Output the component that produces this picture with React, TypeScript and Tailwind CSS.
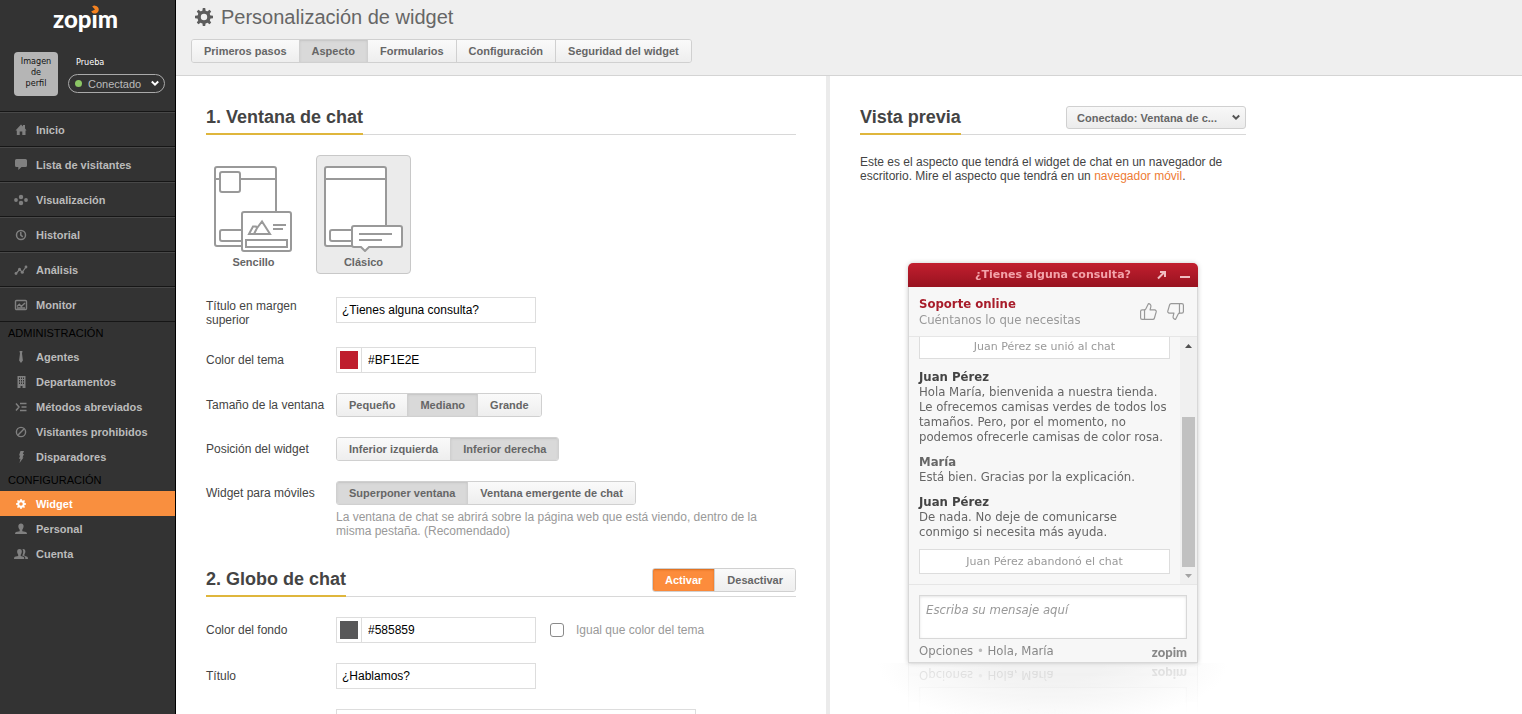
import { useState } from 'react';
import type { ReactNode } from 'react';
import { ThumbsUp, ThumbsDown } from 'lucide-react';
import clsx from 'clsx';

interface NavItem {
  label: string;
  icon: ReactNode;
}

interface ChatMessage {
  id: number;
  author: string;
  text: string;
  isAgent: boolean;
}

const GEAR_TEETH = [0, 45, 90, 135, 180, 225, 270, 315];

function Gear({ className }: { className?: string }) {
  return (
    <svg viewBox="0 0 18 18" className={className} fill="currentColor" aria-hidden="true">
      {GEAR_TEETH.map(a => (
        <path key={a} d="M7.8 0h2.4l.6 4H7.200z" transform={`rotate(${a} 9 9)`} />
      ))}
      <path fillRule="evenodd" d="M9 2.4a6.6 6.6 0 1 0 0 13.2A6.6 6.6 0 1 0 9 2.4zM9 5.8a3.2 3.2 0 1 1 0 6.4 3.2 3.2 0 1 1 0-6.4z" />
    </svg>
  );
}

function NavIcon({ children }: { children: ReactNode }) {
  return (
    <svg viewBox="0 0 14 14" className="w-3.5 h-3.5 shrink-0" fill="currentColor" aria-hidden="true">
      {children}
    </svg>
  );
}

const mainNav: NavItem[] = [
  { label: 'Inicio', icon: <NavIcon><path d="M7 1.500 9 3.500V2h2v3.500L12.500 7.500H11.500V12H8.300V8.500H5.700V12H2.800V7.500H1.500z" /></NavIcon> },
  { label: 'Lista de visitantes', icon: <NavIcon><path d="M2.500 1h9Q13 1 13 2.500V7.500Q13 9 11.500 9H7.500L4.300 12V9H2.500Q1 9 1 7.500V2.500Q1 1 2.500 1z" /></NavIcon> },
  {
    label: 'Visualización',
    icon: (
      <NavIcon>
        <circle cx="2" cy="7" r="1.900" /><circle cx="12" cy="7" r="1.900" />
        <circle cx="7" cy="4" r="2.200" /><circle cx="7" cy="10" r="2.200" />
      </NavIcon>
    ),
  },
  {
    label: 'Historial',
    icon: (
      <NavIcon>
        <g fill="none" stroke="currentColor" strokeWidth="1.500"><circle cx="7" cy="7" r="4.500" /><path d="M6.800 4v3.200l2 1.600" /></g>
      </NavIcon>
    ),
  },
  {
    label: 'Análisis',
    icon: (
      <NavIcon>
        <path d="M2 10.500 5.500 6.500 8.300 9 12 4" fill="none" stroke="currentColor" strokeWidth="1.200" />
        <circle cx="2" cy="10.500" r="1.400" /><circle cx="5.500" cy="6.300" r="1.500" /><circle cx="8.300" cy="9.200" r="1.500" /><circle cx="12" cy="4" r="1.400" />
      </NavIcon>
    ),
  },
  {
    label: 'Monitor',
    icon: (
      <NavIcon>
        <g fill="none" stroke="currentColor" strokeWidth="1.400"><rect x="1.500" y="2.500" width="11" height="9" rx="1" /><path d="M3 8.500 5.300 6.300 7.300 8.500 11 5M3 10h8" /></g>
      </NavIcon>
    ),
  },
];

const adminNav: NavItem[] = [
  { label: 'Agentes', icon: <NavIcon><path d="M5.500 1h3L8 3.500l.9 7L7 13l-1.900-2.500.9-7z" /></NavIcon> },
  {
    label: 'Departamentos',
    icon: (
      <NavIcon>
        <path fillRule="evenodd" d="M3.500 1h8v12H8.500v-2h-2v2h-3zM5 2.500V4h1V2.500zm2 0V4h1V2.500zm2 0V4h1V2.500zM5 5v1.500h1V5zm2 0v1.500h1V5zm2 0v1.500h1V5zM5 7.500V9h1V7.500zm2 0V9h1V7.500zm2 0V9h1V7.500z" />
      </NavIcon>
    ),
  },
  {
    label: 'Métodos abreviados',
    icon: (
      <NavIcon>
        <path d="M2 3.500 5 7l-3 3.500M6 3.500h6.500M7.500 7h5M6 10.500h6.500" fill="none" stroke="currentColor" strokeWidth="1.500" />
      </NavIcon>
    ),
  },
  {
    label: 'Visitantes prohibidos',
    icon: (
      <NavIcon>
        <g fill="none" stroke="currentColor" strokeWidth="1.400"><circle cx="7" cy="7" r="4.600" /><path d="M3.800 10.200 10.200 3.800" /></g>
      </NavIcon>
    ),
  },
  { label: 'Disparadores', icon: <NavIcon><path d="M6.500 1H10L8.800 4H10L8.500 7.500h1L5.500 13l1-4.300H5L6.200 5.500H5z" /></NavIcon> },
];

const configNav: NavItem[] = [
  { label: 'Widget', icon: <Gear className="w-3.5 h-3.5 p-0.5 shrink-0" /> },
  {
    label: 'Personal',
    icon: <NavIcon><path d="M7 1.500c3.300 0 3.200 4 1.300 6.300v1.400L12 10q1 .3 1 2H1q0-1.700 1-2l3.700-.8V7.800C3.800 5.500 3.700 1.500 7 1.500z" /></NavIcon>,
  },
  {
    label: 'Cuenta',
    icon: (
      <NavIcon>
        <path d="M5.500 2c3 0 2.800 3.800 1.200 5.700v1.200l2.800.9q.8.300.8 2.200H0q0-1.900.8-2.200L4.200 9V7.700C2.700 5.500 2.600 2 5.500 2z" />
        <path d="M8.500 2.200c3.200-.7 3.600 3 1.900 5.300v1.300l2.800.9q.8.300.8 2.300h-2.700q.1-2.200-1-2.700L8.200 8.500C9.600 6 9.500 3.700 8.500 2.200z" />
      </NavIcon>
    ),
  },
];

const messages: ChatMessage[] = [
  {
    id: 1,
    author: 'Juan Pérez',
    text: 'Hola María, bienvenida a nuestra tienda. Le ofrecemos camisas verdes de todos los tamaños. Pero, por el momento, no podemos ofrecerle camisas de color rosa.',
    isAgent: true,
  },
  { id: 2, author: 'María', text: 'Está bien. Gracias por la explicación.', isAgent: false },
  { id: 3, author: 'Juan Pérez', text: 'De nada. No deje de comunicarse conmigo si necesita más ayuda.', isAgent: true },
];

export default function App() {
  const [tab, setTab] = useState('Aspecto');
  const [layout, setLayout] = useState('Clásico');
  const [size, setSize] = useState('Mediano');
  const [position, setPosition] = useState('Inferior derecha');
  const [mobile, setMobile] = useState('Superponer ventana');
  const [badge, setBadge] = useState('Activar');

  return (
    <div className="flex h-screen overflow-hidden bg-white font-['Liberation_Sans',Arial,sans-serif] text-xs leading-[14px] text-[#444]">
      <Sidebar />

      <div className="flex flex-col flex-1 min-w-0">
        <header className="h-[76px] shrink-0 bg-[#efefef] border-b border-[#d4d4d4] pl-[15px] pt-1.5">
          <div className="flex items-center gap-2 h-[22px] text-[#666]">
            <Gear className="w-[18px] h-[18px] ml-1 text-[#5c5c5c]" />
            <h1 className="text-xl leading-[22px]">Personalización de widget</h1>
          </div>
          <nav className="mt-[11px]">
            <ButtonGroup
              options={['Primeros pasos', 'Aspecto', 'Formularios', 'Configuración', 'Seguridad del widget']}
              value={tab}
              onChange={setTab}
            />
          </nav>
        </header>

        <div className="flex flex-1 min-h-0">
          <main className="w-[654px] shrink-0 overflow-hidden border-r-4 border-[#ebebeb] px-[30px] pt-[30px]">
            <SectionHeader title="1. Ventana de chat" />

            <div className="flex gap-[15px] mt-5 mb-[23px]">
              <LayoutCard label="Sencillo" active={layout === 'Sencillo'} onSelect={setLayout}>
                <rect x="1" y="1" width="61" height="79" rx="2" />
                <path d="M1 13h61" />
                <rect x="6" y="6" width="20" height="20" rx="2" fill="white" />
                <rect x="6" y="64" width="40" height="11" rx="2" />
                <rect x="28" y="46" width="49" height="39" rx="2" fill="white" />
                <path d="M35 68 39 60.500 42 60.500 43 62 48 55.500 56 68zM43 62l-3 6M59 59h13M59 63h10" />
                <rect x="32" y="74" width="41" height="7" />
              </LayoutCard>
              <LayoutCard label="Clásico" active={layout === 'Clásico'} onSelect={setLayout}>
                <rect x="1" y="1" width="61" height="79" rx="2" fill="white" />
                <path d="M1 13h61" />
                <rect x="6" y="64" width="40" height="11" rx="2" />
                <path d="M30 60h46q2 0 2 2v17q0 2-2 2H45l-4 4-4-4h-7q-2 0-2-2V62q0-2 2-2z" fill="white" />
                <path d="M35 68h33M35 74h23" />
              </LayoutCard>
            </div>

            <div className="space-y-5">
              <div className="flex items-start">
                <label htmlFor="chat-title" className="w-[130px] pt-0.5 pr-5">Título en margen superior</label>
                <TextInput id="chat-title" value="¿Tienes alguna consulta?" />
              </div>
              <FormRow label="Color del tema" htmlFor="theme-color">
                <ColorInput id="theme-color" value="#BF1E2E" swatch="bg-[#bf1e2e]" />
              </FormRow>
              <FormRow label="Tamaño de la ventana">
                <ButtonGroup options={['Pequeño', 'Mediano', 'Grande']} value={size} onChange={setSize} />
              </FormRow>
              <FormRow label="Posición del widget">
                <ButtonGroup options={['Inferior izquierda', 'Inferior derecha']} value={position} onChange={setPosition} />
              </FormRow>
              <div>
                <FormRow label="Widget para móviles">
                  <ButtonGroup options={['Superponer ventana', 'Ventana emergente de chat']} value={mobile} onChange={setMobile} />
                </FormRow>
                <p className="ml-[130px] mr-5 mt-[5px] text-[#999]">
                  La ventana de chat se abrirá sobre la página web que está viendo, dentro de la misma pestaña. (Recomendado)
                </p>
              </div>
            </div>

            <div className="mt-[30px] mb-5">
              <SectionHeader title="2. Globo de chat">
                <ButtonGroup options={['Activar', 'Desactivar']} value={badge} onChange={setBadge} accent />
              </SectionHeader>
            </div>

            <div className="space-y-5">
              <FormRow label="Color del fondo" htmlFor="badge-color">
                <ColorInput id="badge-color" value="#585859" swatch="bg-[#585859]" />
                <label className="flex items-center gap-3 ml-3.5 text-[#999]">
                  <input type="checkbox" className="appearance-none w-3.5 h-3.5 bg-white border border-[#8a8a8a] rounded-[3px] checked:bg-[#fc8c3c]" />
                  Igual que color del tema
                </label>
              </FormRow>
              <FormRow label="Título" htmlFor="badge-title">
                <TextInput id="badge-title" value="¿Hablamos?" />
              </FormRow>
              <div className="ml-[130px]">
                <textarea aria-label="Texto del globo" className="block w-[360px] h-16 border border-[#ddd] resize-none" />
              </div>
            </div>
          </main>

          <aside className="flex-1 min-w-0 overflow-hidden pl-[30px] pt-[30px]">
            <div className="w-[386px]">
              <SectionHeader title="Vista previa">
                <div className="relative">
                  <select
                    aria-label="Estado de la vista previa"
                    className="appearance-none block w-[180px] h-[23px] pl-2.5 pr-6 bg-linear-to-b from-[#f8f8f8] to-[#ececec] border border-[#d0d0d0] rounded-[3px] text-[11px] font-bold text-[#666]"
                  >
                    <option>Conectado: Ventana de c...</option>
                  </select>
                  <Chevron className="absolute right-1.5 top-2 text-[#555]" />
                </div>
              </SectionHeader>
              <p className="mt-5">
                Este es el aspecto que tendrá el widget de chat en un navegador de escritorio. Mire el aspecto que tendrá en un{' '}
                <a href="#movil" className="text-[#ee7c35]">navegador móvil</a>.
              </p>
              <div className="mt-20 ml-12">
                <ChatPreview />
              </div>
            </div>
          </aside>
        </div>
      </div>
    </div>
  );
}

function Sidebar() {
  return (
    <aside className="w-44 shrink-0 bg-[#333] border-r border-black">
      <div className="h-[111px] pt-[7px]">
        <div className="flex justify-center pr-1">
          <div className="relative font-['Lato',sans-serif] font-black text-2xl leading-6 text-white">
            zopim
            <svg viewBox="0 0 10 10" className="absolute left-[37px] -top-0.5 w-2.5 h-2.5" aria-hidden="true">
              <rect width="10" height="10" fill="#333" />
              <path d="M5 4.500 1.200 6.500A4 4 0 1 0 2.200 1.500z" fill="#f58220" />
            </svg>
          </div>
        </div>
        <div className="flex mt-[21px] pl-3.5">
          <div className="w-11 h-11 pt-1 px-1.5 rounded bg-[#b5b5b5] text-center font-['DejaVu_Sans_Condensed','DejaVu_Sans',sans-serif] text-[9px] leading-[11px] text-[#111]">
            Imagen de perfil
          </div>
          <div className="ml-2.5">
            <p className="mt-1 ml-2 font-['DejaVu_Sans_Condensed','DejaVu_Sans',sans-serif] text-[9px] leading-3 text-white">Prueba</p>
            <div className="relative mt-1.5">
              <select aria-label="Estado" className="appearance-none block w-[97px] h-[19px] pl-[19px] bg-transparent border border-[#aaa] rounded-full text-[11px] text-[#bbb]">
                <option>Conectado</option>
              </select>
              <span className="absolute left-[7px] top-1.5 w-[7px] h-[7px] rounded-full bg-[#8cc765]" />
              <Chevron className="absolute right-1.5 top-1.5 text-white" />
            </div>
          </div>
        </div>
      </div>

      <nav className="border-t border-[#161616] text-[11px] font-bold text-[#bbb]">
        {mainNav.map(item => (
          <a
            key={item.label}
            href="#nav"
            className="flex items-center gap-2 h-[35px] pl-3.5 border-t border-t-[#484848] border-b border-b-[#161616]"
          >
            <span className="text-[#808080]">{item.icon}</span>
            {item.label}
          </a>
        ))}
        <NavHeading>ADMINISTRACIÓN</NavHeading>
        {adminNav.map(item => <NavLink key={item.label} item={item} />)}
        <NavHeading>CONFIGURACIÓN</NavHeading>
        {configNav.map(item => <NavLink key={item.label} item={item} active={item.label === 'Widget'} />)}
      </nav>
    </aside>
  );
}

function NavHeading({ children }: { children: ReactNode }) {
  return <h2 className="flex items-center h-[22px] pl-2 font-normal text-black">{children}</h2>;
}

function NavLink({ item, active }: { item: NavItem; active?: boolean }) {
  return (
    <a href="#nav" className={clsx('flex items-center gap-2 h-[25px] pl-3.5', active && 'bg-[#f98f3f] text-white')}>
      <span className={active ? 'text-white' : 'text-[#808080]'}>{item.icon}</span>
      {item.label}
    </a>
  );
}

function Chevron({ className }: { className?: string }) {
  return (
    <svg viewBox="0 0 8 7" className={clsx('w-2 h-[7px] pointer-events-none', className)} fill="none" stroke="currentColor" strokeWidth="2" aria-hidden="true">
      <path d="M.8 1.500 4 4.700 7.200 1.500" />
    </svg>
  );
}

function SectionHeader({ title, children }: { title: string; children?: ReactNode }) {
  return (
    <div className="flex items-start justify-between h-[29px] border-b border-[#d8d8d8]">
      <h2 className="h-[29px] border-b-2 border-[#dfb63c] text-lg leading-[22px] font-bold text-[#444]">{title}</h2>
      {children}
    </div>
  );
}

interface ButtonGroupProps {
  options: string[];
  value: string;
  onChange: (v: string) => void;
  accent?: boolean;
}

function ButtonGroup({ options, value, onChange, accent }: ButtonGroupProps) {
  return (
    <div className="inline-flex h-6 border border-[#d0d0d0] rounded-[3px] overflow-hidden align-top text-[11px] font-bold text-[#666]">
      {options.map(opt => (
        <button
          key={opt}
          type="button"
          onClick={() => onChange(opt)}
          className={clsx(
            'px-3 border-r border-[#d0d0d0] last:border-r-0',
            opt !== value && 'bg-linear-to-b from-[#fafafa] to-[#eeeeee]',
            opt === value && !accent && 'bg-[#d9d9d9] shadow-[inset_0_1px_2px_#c4c4c4]',
            opt === value && accent && 'bg-[#fc8c3c] text-white shadow-[inset_0_1px_2px_#d86a1c]',
          )}
        >
          {opt}
        </button>
      ))}
    </div>
  );
}

interface LayoutCardProps {
  label: string;
  active: boolean;
  onSelect: (v: string) => void;
  children: ReactNode;
}

function LayoutCard({ label, active, onSelect, children }: LayoutCardProps) {
  return (
    <button
      type="button"
      onClick={() => onSelect(label)}
      className={clsx(
        'flex flex-col items-center w-[95px] h-[119px] pt-2.5 border rounded text-[11px] font-bold text-[#666]',
        active ? 'bg-[#ebebeb] border-[#c8c8c8]' : 'border-transparent',
      )}
    >
      <svg viewBox="0 0 79 86" className="w-[79px] h-[86px] mb-[3px]" fill="none" stroke="#999" strokeWidth="2" aria-hidden="true">
        {children}
      </svg>
      {label}
    </button>
  );
}

function FormRow({ label, htmlFor, children }: { label: string; htmlFor?: string; children: ReactNode }) {
  return (
    <div className="flex items-center">
      {htmlFor ? <label htmlFor={htmlFor} className="w-[130px]">{label}</label> : <span className="w-[130px]">{label}</span>}
      {children}
    </div>
  );
}

function TextInput({ id, value }: { id: string; value: string }) {
  return <input id={id} type="text" defaultValue={value} className="w-[200px] h-[26px] px-[5px] border border-[#ddd] text-black" />;
}

function ColorInput({ id, value, swatch }: { id: string; value: string; swatch: string }) {
  return (
    <div className="flex w-[200px] h-[26px] border border-[#ddd]">
      <div className="w-[25px] p-[3px] border-r border-[#ddd]">
        <div className={clsx('h-full', swatch)} />
      </div>
      <input id={id} type="text" defaultValue={value} className="flex-1 min-w-0 px-1.5 text-black" />
    </div>
  );
}

function SystemNotice({ children }: { children: ReactNode }) {
  return <p className="h-[25px] shrink-0 bg-white border border-[#ddd] text-center font-['DejaVu_Sans',sans-serif] text-[11px] leading-[23px] text-[#999]">{children}</p>;
}

function ChatPreview() {
  return (
    <div className="relative w-[290px] font-['DejaVu_Sans_Condensed','DejaVu_Sans',sans-serif] text-[13px] leading-[15px]">
      {/* Soft floor glow under the widget */}
      <div className="absolute top-full -left-8 -right-8 h-16 bg-[radial-gradient(ellipse_at_top,#f1f1f1_20%,#ffffff_70%)]" />

      <div className="relative rounded-t-[5px] overflow-hidden shadow-[0_0_5px_#ccc] [-webkit-box-reflect:below_0_linear-gradient(transparent_87%,rgba(0,0,0,0.25))]">
        <div className="relative h-6 bg-linear-to-b from-[#c21f2f] to-[#981320] text-center font-['DejaVu_Sans',sans-serif] text-[11px] font-bold leading-6 text-[#f3a3aa]">
          ¿Tienes alguna consulta?
          <svg viewBox="0 0 34 10" className="absolute right-2 top-[7px] w-[34px] h-2.5" fill="none" stroke="#f0bcc1" strokeWidth="2" aria-hidden="true">
            <path d="M2 8.500 8 2.500M4 2h5v5" />
            <path d="M4.500 1H10v5.500z" fill="#f0bcc1" stroke="none" />
            <path d="M24 7h10" />
          </svg>
        </div>

        <div className="bg-[#f7f7f7] border border-t-0 border-[#d8d8d8]">
          <div className="flex items-center justify-between h-[50px] pl-2.5 pr-3 border-b border-[#e6e6e6]">
            <div className="leading-4">
              <p className="font-bold text-[#a81c2a]">Soporte online</p>
              <p className="text-[#999]">Cuéntanos lo que necesitas</p>
            </div>
            <div className="flex gap-2 text-[#999]">
              <button type="button" aria-label="Me gusta"><ThumbsUp className="w-[19px] h-[19px]" strokeWidth={1.5} /></button>
              <button type="button" aria-label="No me gusta"><ThumbsDown className="w-[19px] h-[19px]" strokeWidth={1.5} /></button>
            </div>
          </div>

          {/* Conversation, pinned to the latest message */}
          <div className="flex h-[248px] border-b border-[#e6e6e6]">
            <div className="flex flex-col justify-end flex-1 gap-2.5 px-2.5 pb-2.5 overflow-hidden text-[#666]">
              <SystemNotice>Juan Pérez se unió al chat</SystemNotice>
              {messages.map(msg => (
                <div key={msg.id}>
                  <p className={clsx('font-bold', msg.isAgent ? 'text-[#444]' : 'text-[#666]')}>{msg.author}</p>
                  <p>{msg.text}</p>
                </div>
              ))}
              <SystemNotice>Juan Pérez abandonó el chat</SystemNotice>
            </div>
            <div className="flex flex-col justify-end w-[17px] bg-[#f0f0f0]">
              <div className="h-[17px] flex items-center justify-center">
                <svg viewBox="0 0 7 4" className="w-[7px] h-1" fill="#505050" aria-hidden="true"><path d="M0 4 3.500 0 7 4z" /></svg>
              </div>
              <div className="flex-1" />
              <div className="h-[150px] mx-0.5 bg-[#c1c1c1]" />
              <div className="h-[17px] flex items-center justify-center">
                <svg viewBox="0 0 7 4" className="w-[7px] h-1" fill="#a3a3a3" aria-hidden="true"><path d="M0 0 3.500 4 7 0z" /></svg>
              </div>
            </div>
          </div>

          <div className="h-[77px] px-2.5 pt-2.5">
            <textarea
              aria-label="Mensaje"
              placeholder="Escriba su mensaje aquí"
              className="block w-[268px] h-11 px-1.5 py-1.5 bg-white border border-[#d8d8d8] shadow-[inset_0_1px_3px_#e4e4e4] resize-none italic placeholder:text-[#999]"
            />
            <div className="flex items-start justify-between w-[268px] mt-1 text-[#888]">
              <p>Opciones <span className="text-[#bbb]">•</span> Hola, María</p>
              <p className="mt-0.5 font-['Lato',sans-serif] font-black">zopim</p>
            </div>
          </div>
        </div>
      </div>
    </div>
  );
}
